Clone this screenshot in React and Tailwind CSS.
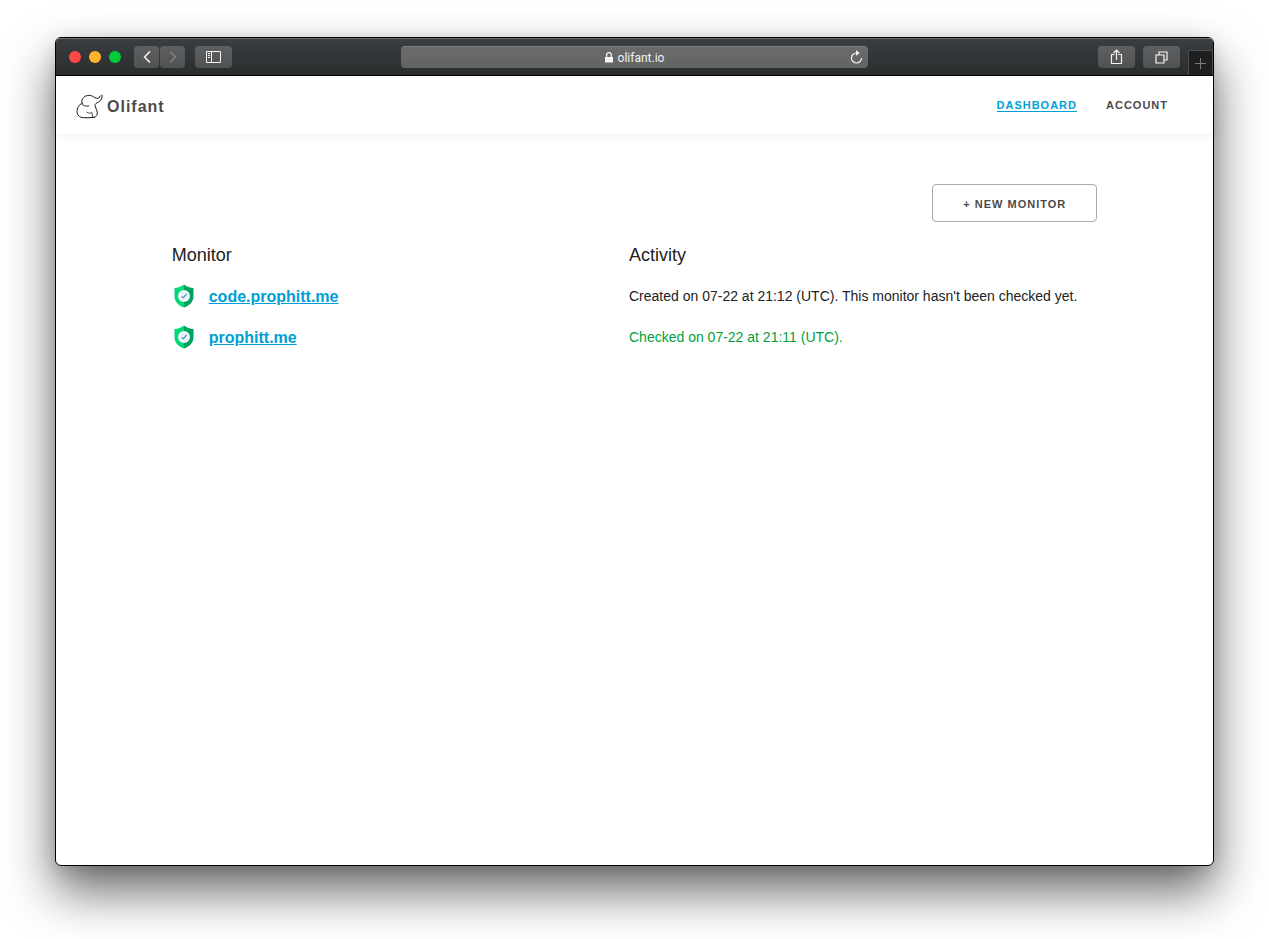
import React from 'react';
import { ChevronLeft, ChevronRight } from 'lucide-react';

const monitors = [
  {
    name: 'code.prophitt.me',
    activity: "Created on 07-22 at 21:12 (UTC). This monitor hasn't been checked yet.",
    checked: false
  },
  {
    name: 'prophitt.me',
    activity: 'Checked on 07-22 at 21:11 (UTC).',
    checked: true
  }
];

const ElephantLogo = () => (
  <svg viewBox="0 0 81 75" className="h-[25px] w-[27px]" fill="none" stroke="#1a1a1a" strokeWidth="3" strokeLinecap="round" aria-hidden="true">
    <path d="M38 36c-10 1-19-1-20-8C15 14 25 4 40 4c11 0 14 8 22 9 5 1 9-1 10-7" />
    <path d="M78 3c1 10-2 16-10 21-7 4-12 5-11 11 1 8 6 12 7 20 0 8-2 13-9 15" />
    <path d="M19 28C8 32 3 42 3 53c0 11 8 17 19 18 12 1 22 0 33-1" />
    <path d="M33 55c6 3 10 3 15 1 1 5 1 9 2 13" strokeWidth="2.4" />
  </svg>
);

const ShieldIcon = () => (
  <svg viewBox="0 0 20 24" className="h-6 w-5" aria-hidden="true">
    <path d="M10 .5C7 2.800 4 3.800.5 4v8c0 6 4 9.500 9.500 11.500z" fill="#00d878" />
    <path d="M10 .5c3 2.300 6 3.300 9.500 3.500v8c0 6-4 9.500-9.500 11.500z" fill="#00a15b" />
    <circle cx="10" cy="12" r="6" fill="#eaf3fb" />
    <path d="M7.600 12.600l1.600 1.200L12.600 10" fill="none" stroke="#4a959c" strokeWidth="1.200" />
  </svg>
);

const ToolbarButton = ({ label, className, children }) => (
  <button
    type="button"
    aria-label={label}
    className={`flex h-[22px] items-center justify-center rounded bg-linear-to-b from-[#5d5f61] to-[#505254] text-gray-100 ${className}`}
  >
    {children}
  </button>
);

const BrowserToolbar = () => (
  <div className="flex h-[38px] items-center rounded-t border-t border-b border-t-[#6d6f70] border-b-black bg-linear-to-b from-[#3a3e40] to-[#2b2d2e]">
    {/* Window controls and navigation */}
    <div className="flex flex-1 items-center">
      <div className="mx-[13px] flex gap-2">
        <span className="size-3 rounded-full bg-[#ff4946]" />
        <span className="size-3 rounded-full bg-[#ffb22c]" />
        <span className="size-3 rounded-full bg-[#00cb3b]" />
      </div>
      <div className="mr-[10px] flex gap-px">
        <ToolbarButton label="Back" className="w-[25px]">
          <ChevronLeft className="h-5 w-5" strokeWidth={2} />
        </ToolbarButton>
        <ToolbarButton label="Forward" className="w-[25px]">
          <ChevronRight className="h-5 w-5 text-[#848688]" strokeWidth={1.5} />
        </ToolbarButton>
      </div>
      <ToolbarButton label="Show sidebar" className="w-[37px]">
        <svg viewBox="0 0 15 12" className="h-3 w-[15px]" fill="none" stroke="currentColor" aria-hidden="true">
          <path d="M.5.5h14v11H.5zM5.500.5v11M2 2.500h2M2 4.500h2M2 6.500h2" />
        </svg>
      </ToolbarButton>
    </div>

    {/* Address bar */}
    <div className="flex h-[22px] w-[467px] items-center rounded border-t border-[#7c7c7e] bg-linear-to-b from-[#6a6b6d] to-[#626365] text-gray-100">
      <div className="flex flex-1 items-center justify-center gap-[5px] pl-6">
        <svg viewBox="0 0 8 11" className="h-[11px] w-2" aria-hidden="true">
          <path d="M0 5h8v5.500H0z" fill="currentColor" />
          <path d="M1.700 5V3a2.300 2.300 0 0 1 4.600 0v2" fill="none" stroke="currentColor" strokeWidth="1.200" />
        </svg>
        <span className="font-['Roboto',sans-serif] text-[12px] leading-4">olifant.io</span>
      </div>
      <button type="button" aria-label="Reload" className="flex w-6 justify-center pb-[2px]">
        <svg viewBox="0 0 13 14" className="h-[14px] w-[13px]" fill="none" stroke="currentColor" strokeWidth="1.200" aria-hidden="true">
          <path d="M6.500 3A5 5 0 1 0 11.500 8" />
          <path d="M6 .3L9.800 3 6 5.700z" fill="currentColor" stroke="none" />
        </svg>
      </button>
    </div>

    <div className="flex flex-1 items-center justify-end gap-2 self-stretch">
      <ToolbarButton label="Share" className="w-[37px]">
        <svg viewBox="0 0 13 16" className="h-4 w-[13px]" fill="none" stroke="currentColor" strokeWidth="1.200" aria-hidden="true">
          <path d="M4.500 5.500h-3v9h10v-9h-3M6.500 11V1.500M3.500 4l3-3 3 3" />
        </svg>
      </ToolbarButton>
      <ToolbarButton label="Show all tabs" className="w-[37px]">
        <svg viewBox="0 0 13 13" className="size-[13px]" fill="none" stroke="currentColor" strokeWidth="1.200" aria-hidden="true">
          <path d="M1 4h8v8H1zM4 4V1h8v8H9" />
        </svg>
      </ToolbarButton>
      <button type="button" aria-label="New tab" className="flex h-[25px] w-[25px] items-center justify-center self-end border-x border-t border-[#4b4d4f] bg-[#1d1f20] text-[#7b7d7e]">
        <svg viewBox="0 0 11 11" className="size-[11px]" stroke="currentColor" aria-hidden="true">
          <path d="M5.500 0v11M0 5.500h11" />
        </svg>
      </button>
    </div>
  </div>
);

const SiteHeader = () => (
  <header className="flex h-[58px] items-center justify-between pr-[45px] pl-5 font-bold tracking-[1px] text-[#4b4b4b] shadow-[0_2px_8px_rgba(0,0,0,0.06)]">
    <a href="#home" className="flex items-center gap-1 pt-[3px]">
      <ElephantLogo />
      <span className="text-base">Olifant</span>
    </a>
    <nav className="flex gap-[29px] text-[11px] leading-3 uppercase">
      <a href="#dashboard" className="border-b border-[#00a0d6] text-[#00a0d6]">Dashboard</a>
      <a href="#account">Account</a>
    </nav>
  </header>
);

const MonitorTable = () => (
  <table className="w-full table-fixed text-left text-[#222]">
    <thead>
      <tr className="h-10 text-lg">
        <th className="w-[48%] font-normal">Monitor</th>
        <th className="pl-[13px] font-normal">Activity</th>
      </tr>
    </thead>
    <tbody>
      {monitors.map((monitor) => (
        <tr key={monitor.name} className="h-[41px]">
          <td>
            <div className="flex items-center gap-[15px] pl-[2px]">
              <ShieldIcon />
              <a href={`#${monitor.name}`} className="pt-[2px] font-bold text-[#00a0d6] underline">{monitor.name}</a>
            </div>
          </td>
          <td className={`pl-[13px] text-sm ${monitor.checked ? 'text-[#00a03c]' : ''}`}>{monitor.activity}</td>
        </tr>
      ))}
    </tbody>
  </table>
);

const App = () => {
  return (
    <div className="flex min-h-screen flex-col bg-white px-[55px] pt-[37px] pb-[73px] font-['Liberation_Sans',Arial,sans-serif]">
      <div className="flex flex-1 flex-col rounded-md border border-black bg-white shadow-[0_25px_50px_rgba(0,0,0,0.6),0_4px_16px_rgba(0,0,0,0.12)]">
        <BrowserToolbar />
        <SiteHeader />

        <main className="mx-auto flex w-4/5 flex-col pt-[50px]">
          <button
            type="button"
            className="mb-[13px] h-[38px] self-end rounded border border-[#aaa] px-[30px] pt-[2px] text-[11px] font-bold tracking-[1px] text-[#4b4b4b] uppercase"
          >
            + New Monitor
          </button>
          <MonitorTable />
        </main>
      </div>
    </div>
  );
};

export default App;
